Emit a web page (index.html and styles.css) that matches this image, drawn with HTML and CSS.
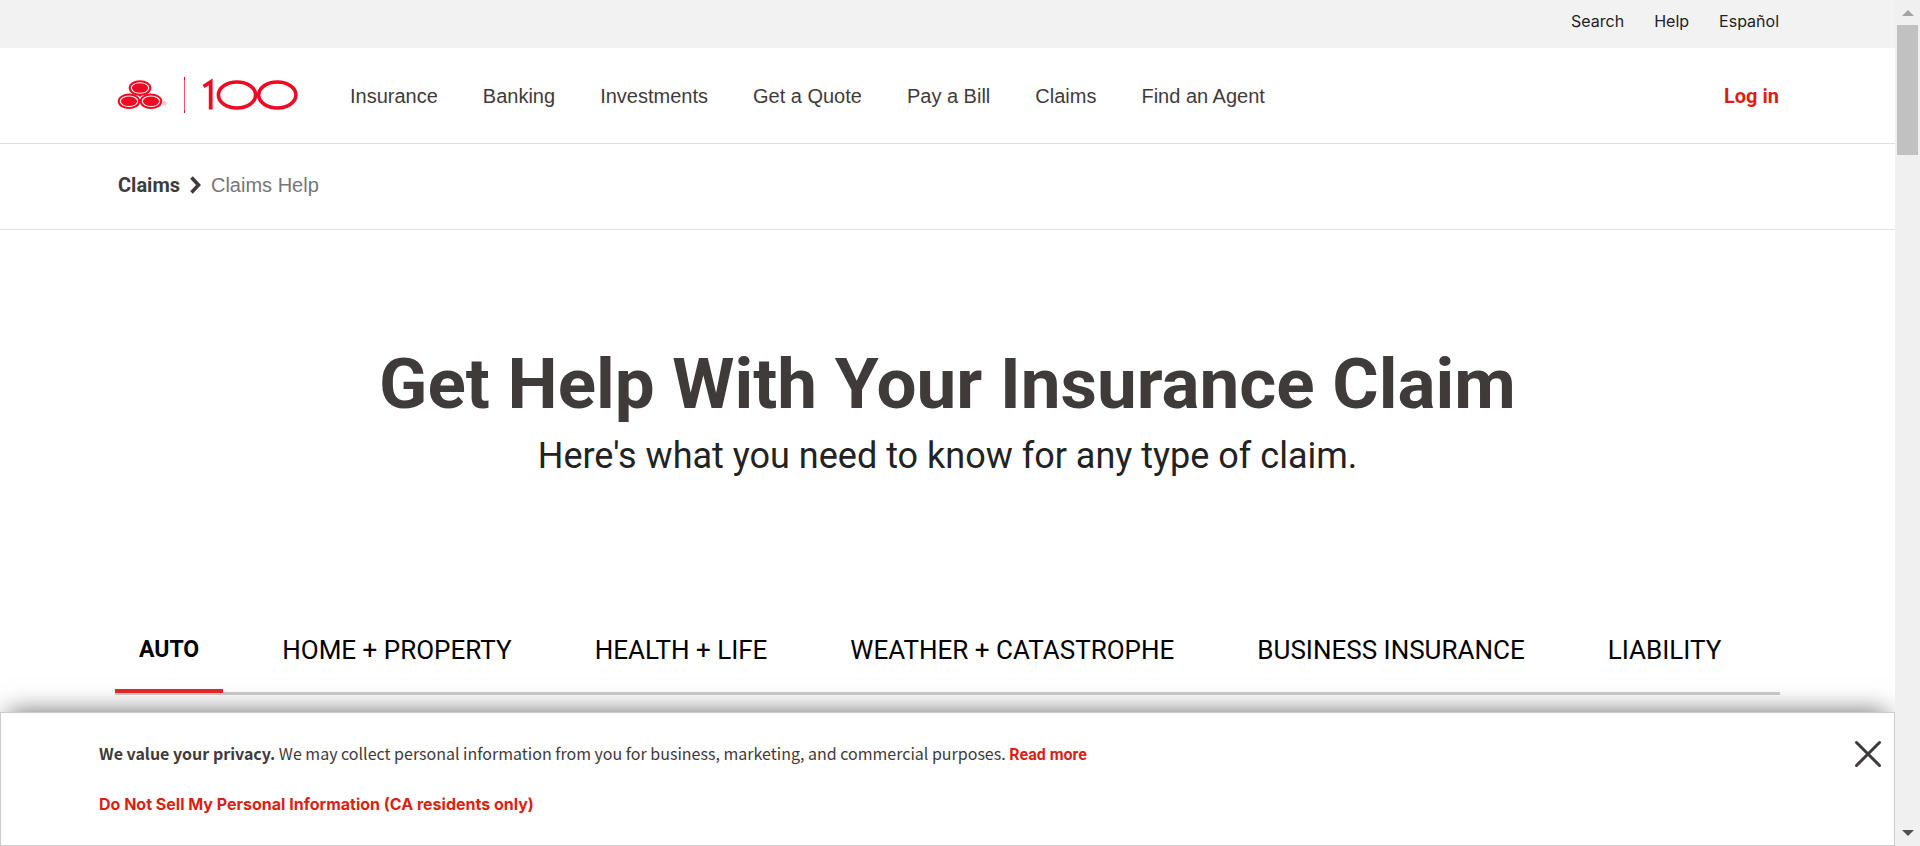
FILE: index.html
```html
<!DOCTYPE html>
<html lang="en">
<head>
<meta charset="utf-8">
<title>Claims Help</title>
<link rel="stylesheet" href="styles.css">
</head>
<body>
<div class="viewport">
  <div class="page">
    <div class="utility">
      <a href="#">Search</a>
      <a href="#">Help</a>
      <a href="#">Español</a>
    </div>
    <header class="header">
      <a class="logo" href="#" aria-label="Home">
        <svg width="182" height="40" viewBox="0 0 182 40" fill="none">
          <g fill="#fff" stroke="#ee0a22" stroke-width="2">
            <ellipse cx="23" cy="12" rx="10.3" ry="6.8"/>
            <ellipse cx="12" cy="25.3" rx="10.3" ry="6.8"/>
            <ellipse cx="34" cy="25.3" rx="10.3" ry="6.8"/>
          </g>
          <g fill="#ee0a22">
            <ellipse cx="23" cy="12" rx="8.1" ry="4.8"/>
            <ellipse cx="12" cy="25.3" rx="8.1" ry="4.8"/>
            <ellipse cx="34" cy="25.3" rx="8.1" ry="4.8"/>
            <path d="M21 19h4l-2 2z"/>
          </g>
          <circle cx="47.5" cy="27.5" r="1.8" stroke="#f59aa4" stroke-width=".7"/>
          <path d="M47 28.5v-2h1v1h-1l1 1" stroke="#f59aa4" stroke-width=".5"/>
          <path d="M67.5 1v36" stroke="#f4566a"/>
          <path d="M67.5 1v3M67.5 34v3" stroke="#ee0a22"/>
          <path d="M86.500 10.500L93.700 6V33.500" stroke="#ee0a22" stroke-width="3.8"/>
          <ellipse cx="120" cy="19" rx="18.6" ry="13" stroke="#ee0a22" stroke-width="3.6"/>
          <ellipse cx="160.3" cy="19" rx="18.6" ry="13" stroke="#ee0a22" stroke-width="3.6"/>
        </svg>
      </a>
      <nav class="nav">
        <a href="#">Insurance</a>
        <a href="#">Banking</a>
        <a href="#">Investments</a>
        <a href="#">Get a Quote</a>
        <a href="#">Pay a Bill</a>
        <a href="#">Claims</a>
        <a href="#">Find an Agent</a>
      </nav>
      <a class="login" href="#">Log in</a>
    </header>
    <nav class="crumbs" aria-label="Breadcrumb">
      <a href="#">Claims</a>
      <svg width="11" height="18" viewBox="0 0 11 18" fill="none"><path d="M1.5 1.5L8.5 9l-7 7.5" stroke="#3f3b3b" stroke-width="3.6"/></svg>
      <span>Claims Help</span>
    </nav>
    <main>
      <section class="hero">
        <h1>Get Help With Your Insurance Claim</h1>
        <p>Here's what you need to know for any type of claim.</p>
      </section>
      <div class="tabs" role="tablist">
        <button class="tab active" role="tab" aria-selected="true">AUTO</button>
        <button class="tab" role="tab">HOME + PROPERTY</button>
        <button class="tab" role="tab">HEALTH + LIFE</button>
        <button class="tab" role="tab">WEATHER + CATASTROPHE</button>
        <button class="tab" role="tab">BUSINESS INSURANCE</button>
        <button class="tab" role="tab">LIABILITY</button>
      </div>
    </main>
    <aside class="privacy">
      <div class="privacy-text">
        <p><strong>We value your privacy.</strong> We may collect personal information from you for business, marketing, and commercial purposes. <a class="more" href="#">Read more</a></p>
        <p><a class="optout" href="#">Do Not Sell My Personal Information (CA residents only)</a></p>
      </div>
      <button class="close" aria-label="Close">
        <svg width="28" height="28" viewBox="0 0 28 28" fill="none"><path d="M2.5 2.5l23 23M25.5 2.5l-23 23" stroke="#3f3b3b" stroke-width="3" stroke-linecap="round"/></svg>
      </button>
    </aside>
  </div>
  <div class="scrollbar" aria-hidden="true">
    <svg class="arrow" width="12" height="6" viewBox="0 0 12 6"><path d="M0 6l6-6 6 6z" fill="#a3a3a3"/></svg>
    <div class="thumb"></div>
    <svg class="arrow down" width="12" height="6" viewBox="0 0 12 6"><path d="M0 0l6 6 6-6z" fill="#505050"/></svg>
  </div>
</div>
</body>
</html>
```
FILE: styles.css
```css
* { box-sizing: border-box; }
body {
  margin: 0;
  background: #fff;
  color: #3f3b3b;
  font-family: Roboto, "Liberation Sans", sans-serif;
}
a { color: inherit; text-decoration: none; }
h1, p { margin: 0; }
button { border: 0; background: none; padding: 0; font: inherit; color: inherit; cursor: pointer; }
svg { display: block; }

.viewport { display: flex; height: 100vh; overflow: hidden; }
.page { position: relative; flex: 1; min-width: 0; overflow: hidden; }

.utility {
  display: flex;
  justify-content: flex-end;
  gap: 30px;
  padding: 11px 116px 17px;
  background: #f2f2f2;
  color: #222;
  font: 16px/20px Inter, sans-serif;
}
.header {
  display: flex;
  align-items: center;
  padding: 28px 116px 27px 117px;
  border-bottom: 1px solid #e0e0e0;
}
.nav {
  display: flex;
  gap: 45px;
  margin-left: 51px;
  font: 20px/24px "Liberation Sans", sans-serif;
}
.login { margin-left: auto; color: #db1f14; font-size: 20px; font-weight: 700; line-height: 24px; }
.crumbs {
  display: flex;
  align-items: center;
  gap: 10px;
  padding: 29px 118px 32px;
  border-bottom: 1px solid #e0e0e0;
  font-size: 20px;
  line-height: 24px;
}
.crumbs a { font-weight: 700; }
.crumbs span { color: #767676; font-family: "Liberation Sans", sans-serif; }

.hero { padding: 110px 24px 0; text-align: center; }
.hero h1 { font-size: 71px; font-weight: 700; line-height: 88px; }
.hero p { color: #222; font-size: 36px; line-height: 56px; }

.tabs {
  display: flex;
  gap: 35px;
  margin: 133px 115px 0;
  border-bottom: 3px solid #ccc;
}
.tab { margin-bottom: -1px; padding: 17px 24px 23px; border-bottom: 4px solid transparent; color: #000; font-size: 26px; line-height: 32px; white-space: nowrap; }
.tab.active { border-color: #e52a25; font-size: 23px; font-weight: 700; }

.privacy {
  position: absolute;
  inset: auto 0 0 0;
  display: flex;
  justify-content: space-between;
  align-items: flex-start;
  padding: 27px 12px 27px 98px;
  border: 1px solid #ccc;
  background: #fff;
  box-shadow: 0 -8px 24px -8px rgba(0, 0, 0, .58);
}
.privacy-text { display: grid; gap: 22px; font: 16px/27px "Noto Sans CJK SC", sans-serif; }
.privacy-text a { color: #db1f14; font-weight: 700; }
.more { font-family: Roboto, sans-serif; }
.optout { font-family: Inter, sans-serif; }

.scrollbar {
  display: flex;
  flex-direction: column;
  align-items: center;
  width: 25px;
  padding: 10px 2px;
  background: #f0f0f0;
}
.thumb { width: 100%; height: 130px; margin-top: 9px; background: #c1c1c1; }
.down { margin-top: auto; }
```
